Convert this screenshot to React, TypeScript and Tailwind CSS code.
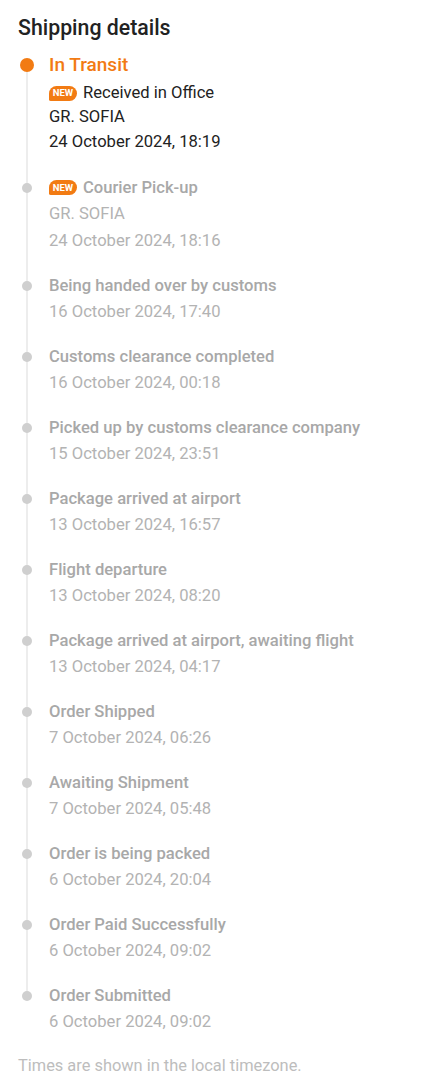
const events = [
  { title: "Being handed over by customs", date: "16 October 2024, 17:40" },
  { title: "Customs clearance completed", date: "16 October 2024, 00:18" },
  { title: "Picked up by customs clearance company", date: "15 October 2024, 23:51" },
  { title: "Package arrived at airport", date: "13 October 2024, 16:57" },
  { title: "Flight departure", date: "13 October 2024, 08:20" },
  { title: "Package arrived at airport, awaiting flight", date: "13 October 2024, 04:17" },
  { title: "Order Shipped", date: "7 October 2024, 06:26" },
  { title: "Awaiting Shipment", date: "7 October 2024, 05:48" },
  { title: "Order is being packed", date: "6 October 2024, 20:04" },
  { title: "Order Paid Successfully", date: "6 October 2024, 09:02" },
  { title: "Order Submitted", date: "6 October 2024, 09:02" },
];

const NewBadge = () => (
  <span className="inline-flex items-center justify-center h-[15px] w-[28px] mr-[6px] bg-[#f27b13] text-white text-[9.5px] font-bold leading-none rounded-[8px] rounded-bl-[2px]">
    NEW
  </span>
);

const Dot = ({ active = false }: { active?: boolean }) =>
  active ? (
    <div className="w-[14px] h-[14px] rounded-full bg-[#f27b13]" />
  ) : (
    <div className="w-[10px] h-[10px] rounded-full bg-[#cfcfcf]" />
  );

export default function App() {
  return (
    <div
      className="w-[427px] min-h-[1089px] bg-white px-[18px] pt-[14px]"
      style={{ fontFamily: "Roboto, 'Noto Sans', sans-serif" }}
    >
      <h1 className="text-[21.3px] font-medium text-[#222] leading-[28px]">Shipping details</h1>

      <div className="relative mt-[9px]">
        {/* timeline line */}
        <div className="absolute left-[8px] top-[14px] bottom-[40px] w-[2px] bg-[#ededed]" />

        {/* current step */}
        <div className="relative">
          <div className="flex items-center h-[28px]">
            <div className="w-[18px] flex justify-center shrink-0">
              <Dot active />
            </div>
            <div className="ml-[13px] text-[19px] font-medium text-[#f27b13]">In Transit</div>
          </div>
          <div className="ml-[31px] text-[16.6px] text-[#222]">
            <div className="flex items-center leading-[24px] mt-[2px]">
              <NewBadge />
              Received in Office
            </div>
            <div className="leading-[24px]">GR. SOFIA</div>
            <div className="leading-[25px]">24 October 2024, 18:19</div>
          </div>
        </div>

        <div className="relative mt-[21px]">
          <div className="flex items-center h-[26px]">
            <div className="w-[18px] flex justify-center shrink-0">
              <Dot />
            </div>
            <div className="ml-[13px] flex items-center text-[16.6px] font-medium text-[#a8a8a8]">
              <NewBadge />
              Courier Pick-up
            </div>
          </div>
          <div className="ml-[31px] text-[16.6px] text-[#b3b3b3]">
            <div className="leading-[26px]">GR. SOFIA</div>
            <div className="leading-[28px]">24 October 2024, 18:16</div>
          </div>
        </div>

        {events.map((e, i) => (
          <div key={e.title + e.date} className={`relative ${i === 0 ? "mt-[18px]" : "mt-[19px]"}`}>
            <div className="flex items-center h-[26px]">
              <div className="w-[18px] flex justify-center shrink-0">
                <Dot />
              </div>
              <div className="ml-[13px] text-[16.6px] font-medium text-[#a8a8a8]">{e.title}</div>
            </div>
            <div className="ml-[31px] text-[16.6px] text-[#b3b3b3] leading-[26px]">{e.date}</div>
          </div>
        ))}
      </div>

      <p className="mt-[20px] text-[16.4px] text-[#bdbdbd] leading-[22px]">
        Times are shown in the local timezone.
      </p>
    </div>
  );
}
